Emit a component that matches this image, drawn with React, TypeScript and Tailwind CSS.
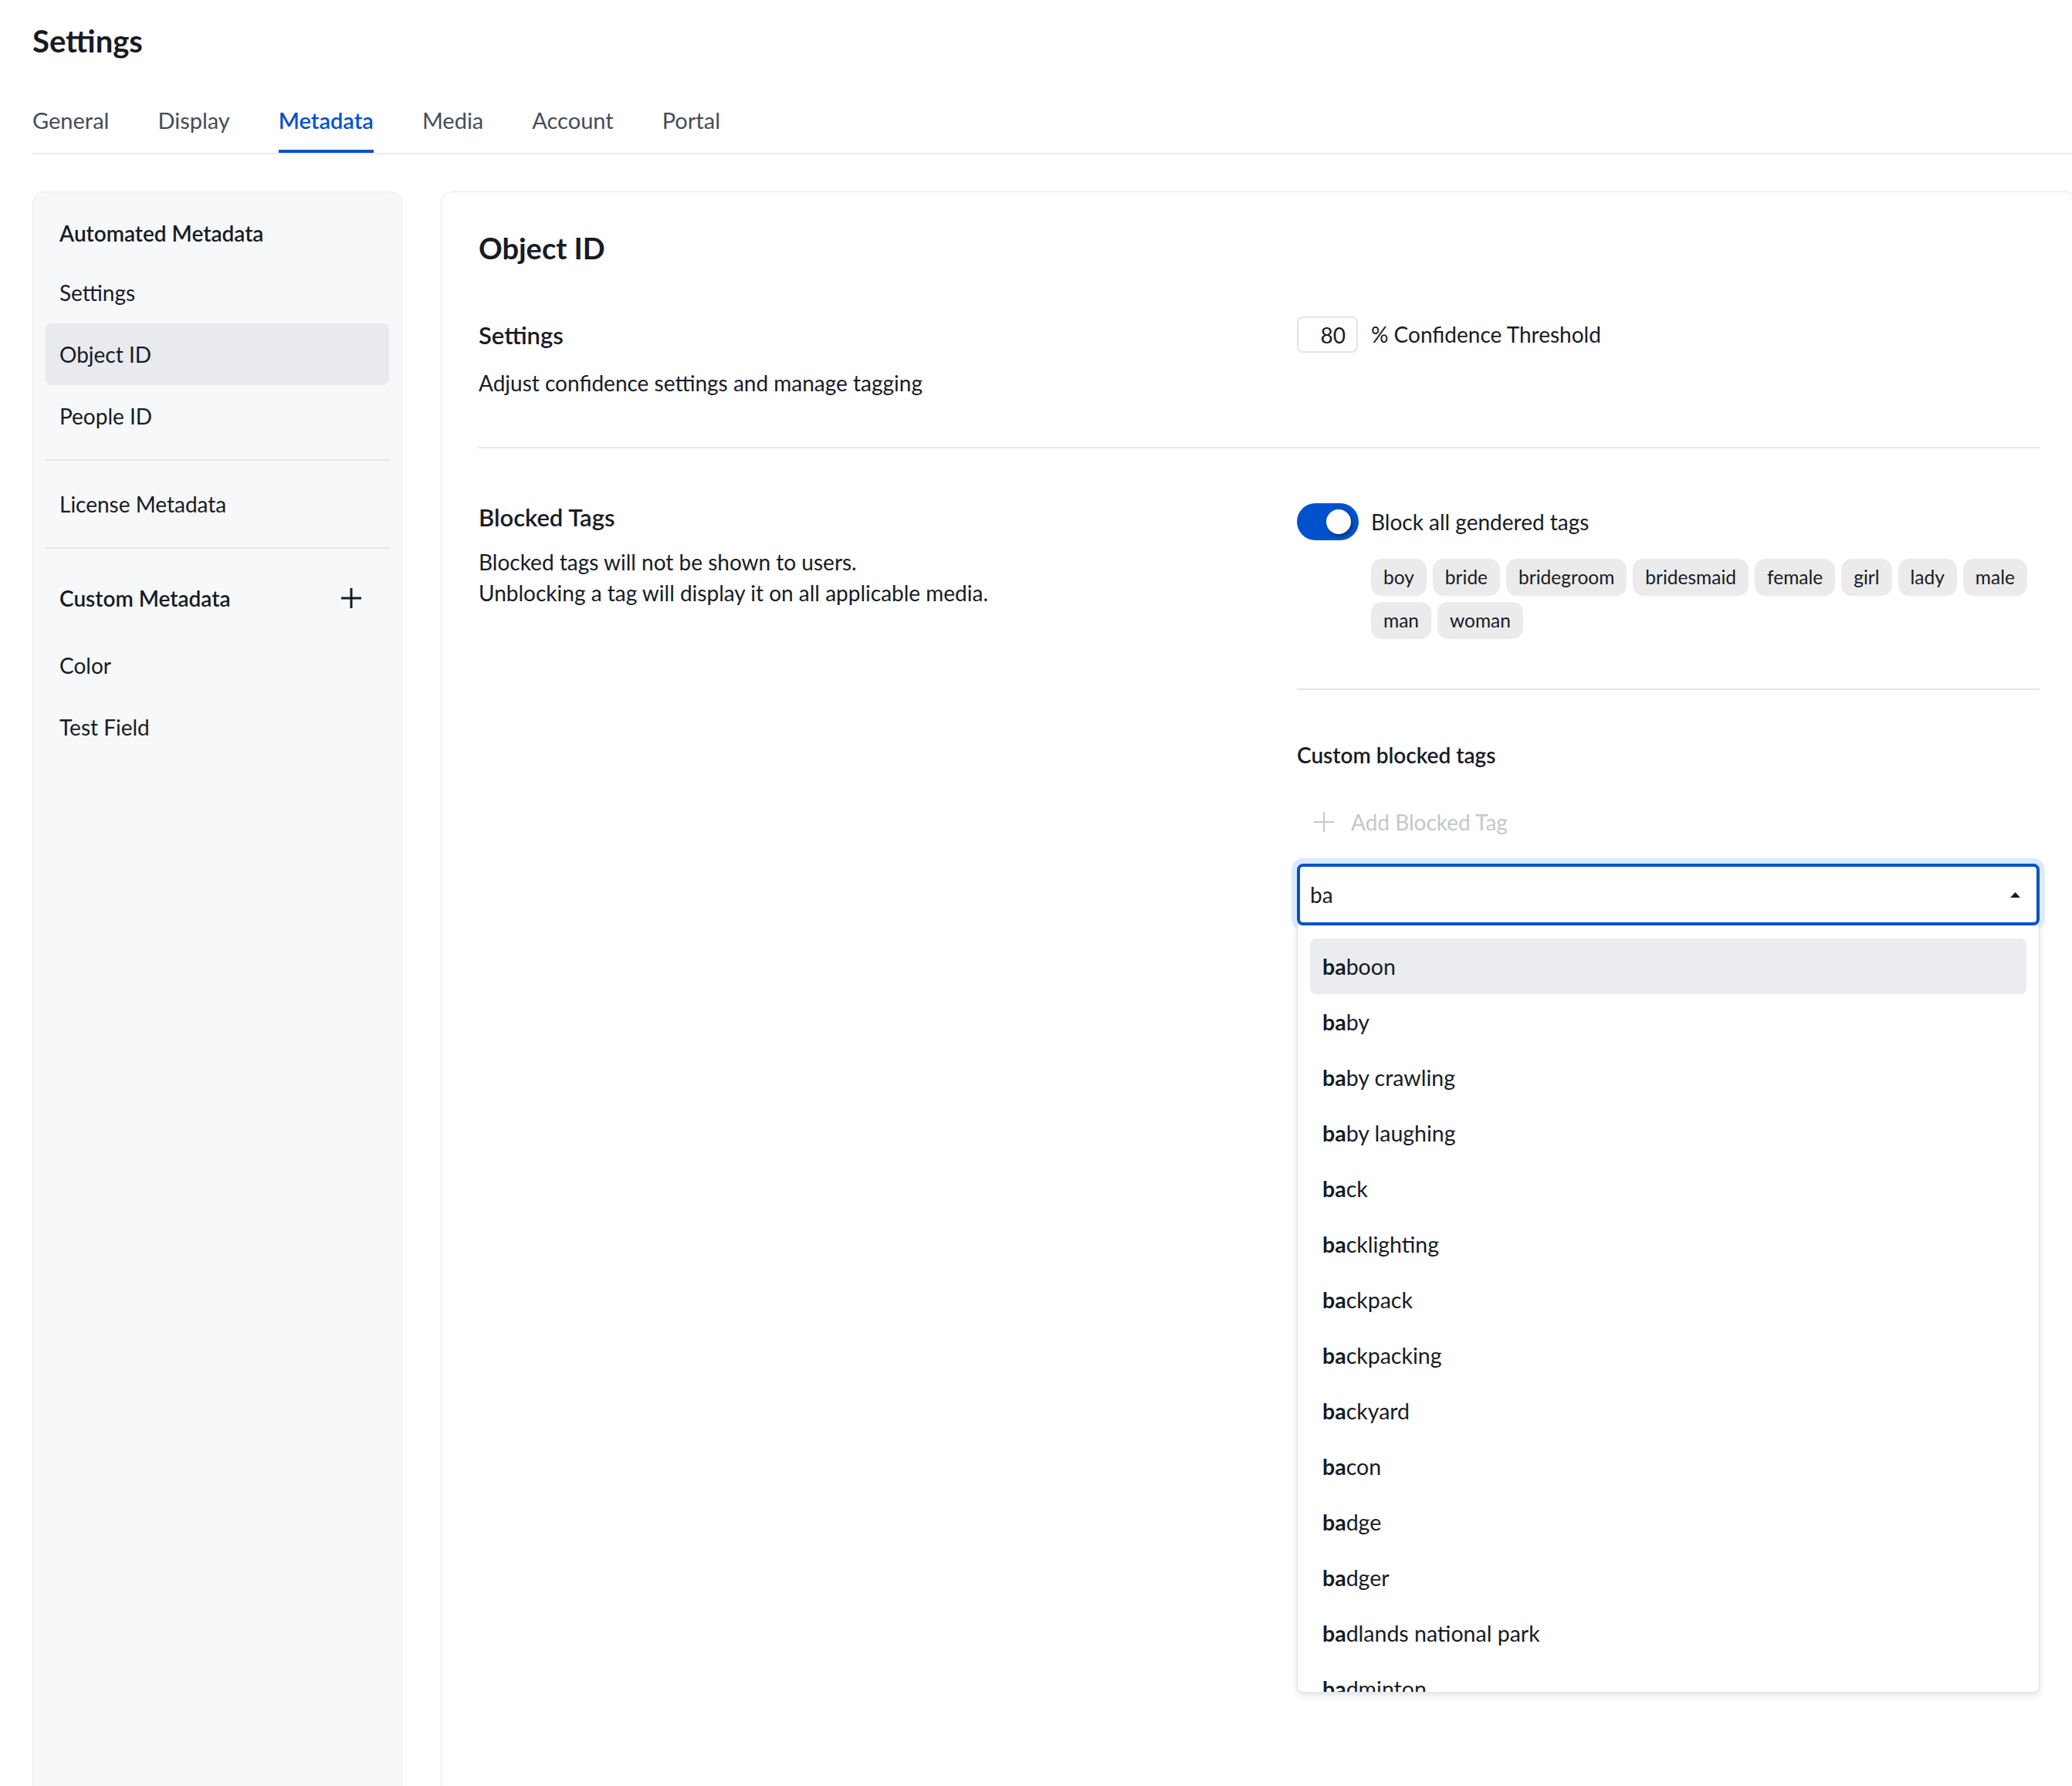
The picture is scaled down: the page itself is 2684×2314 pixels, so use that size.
import { ReactNode } from 'react';

const tabs = ['General', 'Display', 'Metadata', 'Media', 'Account', 'Portal'];

const genderedTags = ['boy', 'bride', 'bridegroom', 'bridesmaid', 'female', 'girl', 'lady', 'male', 'man', 'woman'];

const suggestions = [
  'baboon',
  'baby',
  'baby crawling',
  'baby laughing',
  'back',
  'backlighting',
  'backpack',
  'backpacking',
  'backyard',
  'bacon',
  'badge',
  'badger',
  'badlands national park',
  'badminton',
];

function PlusIcon({ className = '', strokeWidth = 2 }: { className?: string; strokeWidth?: number }) {
  return (
    <svg className={className} viewBox="0 0 26 26" fill="none" stroke="currentColor" strokeWidth={strokeWidth}>
      <path d="M13 0v26M0 13h26" />
    </svg>
  );
}

function SideItem({ children, active = false }: { children: ReactNode; active?: boolean }) {
  return (
    <div className={`h-20 flex items-center pl-[18px] rounded-lg text-[28px] ${active ? 'bg-[#e9eaee]' : ''}`}>
      {children}
    </div>
  );
}

function Toggle() {
  return (
    <div className="w-20 h-12 rounded-full bg-[#0052cc] flex items-center justify-end pr-[10px] shrink-0">
      <div className="w-8 h-8 rounded-full bg-white shadow-[2px_3px_4px_rgba(0,0,0,0.35)]" />
    </div>
  );
}

export default function App() {
  return (
    <div className="w-[2684px] h-[2314px] overflow-hidden bg-white font-['Lato','Open_Sans',sans-serif] text-[#161b26]">
      <div className="w-[2733px] px-[42px] pt-[29px]">
        <h1 className="text-[40px] leading-[48px] font-bold">Settings</h1>

        <nav className="mt-[61px] flex gap-[63px] border-b-2 border-[#ebecf0]">
          {tabs.map((t) => (
            <div
              key={t}
              className={`pb-5 border-b-4 text-[29px] leading-9 ${
                t === 'Metadata' ? 'border-[#0052cc] text-[#0052cc] font-semibold' : 'border-transparent text-[#434d5c]'
              }`}
            >
              {t}
            </div>
          ))}
        </nav>

        <div className="mt-12 flex gap-[50px] items-start">
          {/* sidebar */}
          <aside className="w-[479px] h-[2200px] shrink-0 rounded-2xl border border-[#ebecf0] bg-[#f7f8fa] px-4 pt-4">
            <div className="h-[74px] flex items-center pl-[18px] text-[28px] font-semibold">Automated Metadata</div>
            <SideItem>Settings</SideItem>
            <SideItem active>Object ID</SideItem>
            <SideItem>People ID</SideItem>
            <div className="my-4 h-[2px] bg-[#e4e6ea]" />
            <SideItem>License Metadata</SideItem>
            <div className="my-4 h-[2px] bg-[#e4e6ea]" />
            <div className="h-[95px] flex items-center justify-between pl-[18px] pr-[36px] text-[28px] font-semibold">
              <span>Custom Metadata</span>
              <PlusIcon className="w-[26px] h-[26px]" strokeWidth={3} />
            </div>
            <SideItem>Color</SideItem>
            <SideItem>Test Field</SideItem>
          </aside>

          {/* main card */}
          <main className="w-[2120px] h-[2200px] shrink-0 rounded-2xl border border-[#e4e6ea] px-12 pt-12">
            <h2 className="text-[38px] leading-[48px] font-bold">Object ID</h2>

            <section className="grid grid-cols-[1060px_962px] pt-[65px] pb-[63px] border-b-2 border-[#e4e6ea]">
              <div>
                <h3 className="text-[31px] leading-[48px] font-semibold">Settings</h3>
                <p className="mt-[18px] text-[28px] leading-10">Adjust confidence settings and manage tagging</p>
              </div>
              <div className="flex items-start gap-[17px]">
                <div className="w-[79px] h-[47px] rounded-lg border-2 border-[#e2e4e8] flex items-center justify-end pr-[14px] text-[28px]">
                  80
                </div>
                <span className="text-[28px] leading-[47px]">% Confidence Threshold</span>
              </div>
            </section>

            <section className="grid grid-cols-[1060px_962px] pt-[65px]">
              <div>
                <h3 className="text-[31px] leading-[48px] font-semibold">Blocked Tags</h3>
                <p className="mt-[14px] text-[28px] leading-10">
                  Blocked tags will not be shown to users.
                  <br />
                  Unblocking a tag will display it on all applicable media.
                </p>
              </div>

              <div className="pt-[6px]">
                <div className="flex items-center gap-4">
                  <Toggle />
                  <span className="text-[28px]">Block all gendered tags</span>
                </div>
                <div className="mt-6 pl-24 flex flex-wrap gap-2">
                  {genderedTags.map((t) => (
                    <span key={t} className="h-12 px-4 rounded-[14px] bg-[#ebebeb] flex items-center text-[24.5px]">
                      {t}
                    </span>
                  ))}
                </div>

                <div className="mt-16 h-[2px] bg-[#e4e6ea]" />

                <div className="mt-[64px] text-[28px] leading-10 font-semibold">Custom blocked tags</div>

                <button className="mt-[39px] h-14 flex items-center pl-[22px] gap-[22px] text-[28px] text-[#c3c7ce]">
                  <PlusIcon className="w-[26px] h-[26px]" strokeWidth={2} />
                  Add Blocked Tag
                </button>

                <div className="relative mt-[26px]">
                  <div className="h-20 rounded-lg border-4 border-[#0052cc] shadow-[0_0_0_7px_#dce9fb] flex items-center justify-between pl-[13px] pr-[21px] bg-white">
                    <span className="text-[28px]">ba</span>
                    <svg className="w-[13px] h-[7px]" viewBox="0 0 13 7" fill="currentColor">
                      <path d="M6.5 0L13 7H0z" />
                    </svg>
                  </div>

                  <div className="absolute left-0 right-0 top-full h-[994px] overflow-hidden bg-white border border-t-0 border-[#dfe1e6] rounded-b-lg shadow-[0_4px_10px_rgba(9,30,66,0.12)] p-4 pt-[17px]">
                    {suggestions.map((s, i) => (
                      <div
                        key={s}
                        className={`h-[72px] shrink-0 flex items-center px-4 rounded-lg text-[28.5px] ${i === 0 ? 'bg-[#ebecf0]' : ''}`}
                      >
                        <span className="font-bold">ba</span>
                        <span>{s.slice(2)}</span>
                      </div>
                    ))}
                  </div>
                </div>
              </div>
            </section>
          </main>
        </div>
      </div>
    </div>
  );
}
